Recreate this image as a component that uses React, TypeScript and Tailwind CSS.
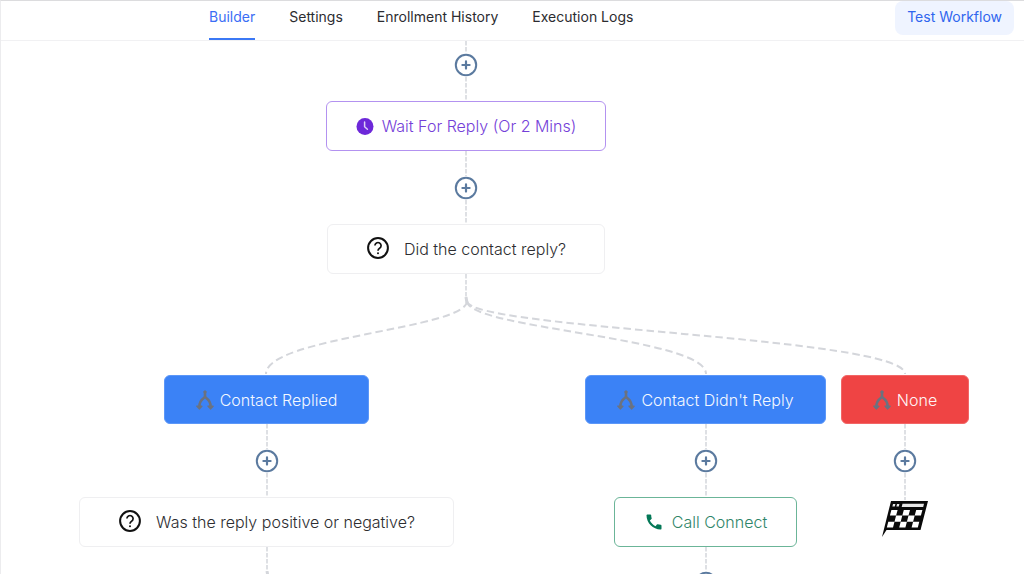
import type { ReactNode } from 'react';
import clsx from 'clsx';
import { MdCall } from 'react-icons/md';

const TABS = ['Builder', 'Settings', 'Enrollment History', 'Execution Logs'];

function ClockIcon() {
  return (
    <svg viewBox="0 0 18 18" className="size-[18px] shrink-0" aria-hidden="true">
      <circle cx="9" cy="9.5" r="8.5" fill="#6d28d9" />
      <path d="M8.6 5.1V9.7L11.4 12.3" fill="none" stroke="#ddd0f7" strokeWidth="1.5" strokeLinecap="round" />
    </svg>
  );
}

function QuestionIcon() {
  return (
    <svg viewBox="0 0 24 24" className="mb-0.5 size-6 shrink-0" fill="none" stroke="#111" aria-hidden="true">
      <circle cx="12" cy="12" r="9.9" strokeWidth="2" />
      <path d="M8.9 9.6a3.1 3.1 0 1 1 4.7 2.7c-1.1.7-1.6 1.2-1.6 2.4" strokeWidth="1.7" />
      <circle cx="12" cy="17.2" r="1" fill="#111" stroke="none" />
    </svg>
  );
}

function ForkIcon() {
  return (
    <svg viewBox="0 0 18 20" className="h-5 w-[18px] shrink-0" fill="none" stroke="#6b7280" aria-hidden="true">
      <path d="M9 1.5V6C9 9 3.4 8.5 3.4 16.5M9 6C9 9 14.6 8.5 14.6 16.5" strokeWidth="2.6" />
      <path d="M7.4 2.4L9 0.8L10.6 2.4" strokeWidth="1.2" />
      <path d="M1 16.2H5.8L3.4 18.8ZM12.2 16.2H17L14.6 18.8Z" fill="#6b7280" strokeWidth="1.6" strokeLinejoin="round" />
    </svg>
  );
}

function FinishFlag() {
  return (
    <svg viewBox="0 0 48 38" className="h-[38px] w-12 shrink-0" role="img" aria-label="End">
      <path d="M10 1H47L39.5 30H5.5L1 37Z" fill="#0a0a0a" />
      <path d="M12 4H14.4L13.8 6.6H11.4ZM16 4H18.4L17.8 6.6H15.4ZM21.5 3.8H43L42.2 7H20.7Z" fill="#e8e8e8" />
      <g fill="#fff">
        <path d="M10.4 10H16.6L15.1 15.6H8.9ZM22.8 10H29L27.5 15.6H21.3ZM35.2 10H41.4L39.9 15.6H33.7Z" />
        <path d="M15.1 15.6H21.3L19.7 21.8H13.5ZM27.5 15.6H33.7L32.1 21.8H25.9Z" />
        <path d="M7.3 21.8H13.5L12 27.6H5.8ZM19.7 21.8H25.9L24.4 27.6H18.2ZM32.1 21.8H38.3L36.8 27.6H30.6Z" />
      </g>
    </svg>
  );
}

function AddButton() {
  return (
    <button type="button" aria-label="Add step" className="size-6 shrink-0 rounded-full">
      <svg viewBox="0 0 24 24" className="size-6" fill="none" stroke="#5b7a9f" strokeWidth="2" aria-hidden="true">
        <circle cx="12" cy="12" r="10.2" />
        <path d="M12 8.4V15.6M8.4 12H15.6" strokeWidth="2.2" strokeLinecap="round" />
      </svg>
    </button>
  );
}

function Link({ className = 'h-6' }: { className?: string }) {
  return (
    <svg className={clsx('w-2 shrink-0', className)} aria-hidden="true">
      <path d="M4 0V40" stroke="#d4d6db" strokeWidth="1.5" strokeDasharray="4.5 1.5" />
    </svg>
  );
}

// the knot where a line splits
function Joint() {
  return (
    <svg className="h-2 w-2 shrink-0" aria-hidden="true">
      <path d="M4 0L5 6" stroke="#d4d6db" strokeWidth="3" />
    </svg>
  );
}

// curves from the condition down to its three branches
function Fork() {
  return (
    <svg viewBox="0 0 932 74" className="h-[74px] w-[932px] shrink-0 overflow-visible" fill="none" stroke="#d4d6db" aria-hidden="true">
      <g strokeWidth="2" strokeDasharray="7.5 4">
        <path d="M467 0C467 28 266 36 266 73" />
        <path d="M467 0C467 28 706 36 706 73" />
        <path d="M467 0C467 28 905 36 905 73" />
      </g>
      <path d="M466 -4L467 2" strokeWidth="3" />
    </svg>
  );
}

const VARIANTS = {
  wait: 'h-[50px] gap-2 border-[#b392f0] bg-white px-[29px] text-[#7440d8]',
  condition: 'h-[50px] gap-[14px] border-[#efeff1] bg-white px-[38px] text-[#2d2d30]',
  call: 'h-[50px] gap-2 border-[#6bb598] bg-white px-[29px] text-[#2f8569]',
  branch: 'h-[49px] gap-1.5 border-[#5c97f8] bg-[#3b82f6] px-[31px] text-[#f4f8ff]',
  none: 'h-[49px] gap-1.5 border-[#f26666] bg-[#ef4444] px-[31px] text-[#fff4f4]',
};

interface NodeProps {
  variant: keyof typeof VARIANTS;
  icon: ReactNode;
  children: ReactNode;
}

function Node({ variant, icon, children }: NodeProps) {
  return (
    <button
      type="button"
      className={clsx(
        'flex shrink-0 items-center whitespace-nowrap rounded-md border text-base font-light',
        VARIANTS[variant],
      )}
    >
      {icon}
      <span>{children}</span>
    </button>
  );
}

function Branch({ className, children }: { className: string; children: ReactNode }) {
  return <div className={clsx('flex shrink-0 flex-col items-center', className)}>{children}</div>;
}

function Header() {
  return (
    <header className="flex h-10 shrink-0 items-start justify-between border-b border-[#f1f1f3] pr-[10px]">
      <nav className="flex h-full gap-[34px] pl-52">
        {TABS.map((tab, i) => (
          <a
            key={tab}
            href="#"
            className={clsx(
              'h-[39px] whitespace-nowrap border-b-2 pt-[6px] text-sm',
              i === 0 ? 'border-[#3b78f5] text-[#3b6ef5]' : 'border-transparent text-[#2c2c30]',
            )}
          >
            {tab}
          </a>
        ))}
      </nav>
      <button type="button" className="rounded-lg bg-[#eff4ff] px-3 pb-2 pt-[6px] text-sm text-[#2f66ee]">
        Test Workflow
      </button>
    </header>
  );
}

export default function App() {
  return (
    <div className="flex h-screen flex-col overflow-hidden border-l border-t border-l-[#ececee] border-t-[#dcdcde] bg-white font-['Inter',sans-serif]">
      <Header />
      <main className="-ml-px flex-1 overflow-hidden">
        <div className="flex w-[932px] flex-col items-center">
          <Link className="h-3" />
          <AddButton />
          <Link />
          <Node variant="wait" icon={<ClockIcon />}>
            Wait For Reply (Or 2 Mins)
          </Node>
          <Link className="h-[25px]" />
          <AddButton />
          <Link />
          <Node variant="condition" icon={<QuestionIcon />}>
            Did the contact reply?
          </Node>
          <Link className="h-[27px]" />
          <Fork />
          <div className="flex w-full">
            <Branch className="w-[533px]">
              <Node variant="branch" icon={<ForkIcon />}>
                Contact Replied
              </Node>
              <Link className="h-[25px]" />
              <AddButton />
              <Link />
              <Node variant="condition" icon={<QuestionIcon />}>
                Was the reply positive or negative?
              </Node>
              <Link />
              <Joint />
            </Branch>
            <Branch className="w-[345px]">
              <Node variant="branch" icon={<ForkIcon />}>
                Contact Didn't Reply
              </Node>
              <Link className="h-[25px]" />
              <AddButton />
              <Link />
              <Node variant="call" icon={<MdCall className="size-5" color="#047857" />}>
                Call Connect
              </Node>
              <Link />
              <AddButton />
            </Branch>
            <Branch className="w-[54px]">
              <Node variant="none" icon={<ForkIcon />}>
                None
              </Node>
              <Link className="h-[25px]" />
              <AddButton />
              <Link className="h-[27px]" />
              <FinishFlag />
            </Branch>
          </div>
        </div>
      </main>
    </div>
  );
}
